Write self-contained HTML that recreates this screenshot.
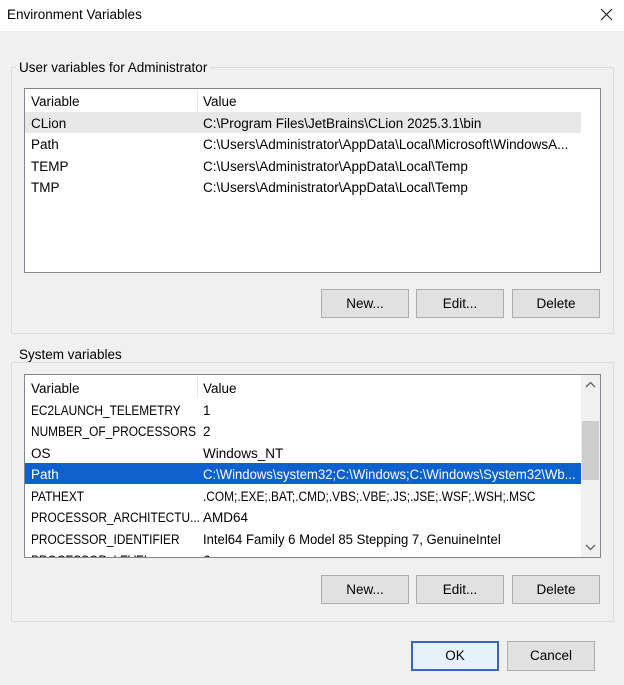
<!DOCTYPE html>
<html><head><style>
*{margin:0;padding:0;box-sizing:border-box}
body{width:624px;height:685px;background:#f0f0f0;font-family:"Liberation Sans",sans-serif;font-size:13px;color:#000;position:relative;overflow:hidden}
.abs{position:absolute}
.title{left:0;top:0;width:624px;height:31px;background:#fff}
.t{white-space:nowrap;position:absolute}
.grp{border:1px solid #dcdcdc;}
.lbl{background:#f0f0f0;padding:0 3px}
.list{background:#fff;border:1px solid #828790;overflow:hidden;font-size:13.5px}
.row{position:absolute;left:0;height:21px;line-height:23px;white-space:nowrap}
.row span{position:absolute}
.u{transform:scaleX(.88);transform-origin:0 0}
.btn{position:absolute;background:#e1e1e1;border:1px solid #adadad;text-align:center;line-height:28px;height:29px;width:88px;font-size:13.5px}
</style></head><body>
<div class="abs title"></div>
<div class="t" style="left:7px;top:7px;font-size:13.5px">Environment Variables</div>
<svg class="abs" style="left:600px;top:8px" width="13" height="13"><path d="M1 1L12 12M12 1L1 12" stroke="#222" stroke-width="1.2"/></svg>

<div class="abs grp" style="left:11px;top:67px;width:603px;height:267px"></div>
<div class="t lbl" style="left:16px;top:60px;font-size:13.5px">User variables for Administrator</div>
<div class="abs list" style="left:24px;top:88px;width:577px;height:185px">
 <div class="row" style="top:1px;width:575px"><span style="left:6px">Variable</span><span style="left:172px;border-left:1px solid #e5e5e5;padding-left:5px;height:21px">Value</span></div>
 <div class="row" style="top:23px;width:556px;background:#e8e8e8"><span style="left:6px">CLion</span><span style="left:178px">C:\Program Files\JetBrains\CLion 2025.3.1\bin</span></div>
 <div class="row" style="top:44px"><span style="left:6px">Path</span><span style="left:178px">C:\Users\Administrator\AppData\Local\Microsoft\WindowsA...</span></div>
 <div class="row" style="top:66px"><span style="left:6px">TEMP</span><span style="left:178px">C:\Users\Administrator\AppData\Local\Temp</span></div>
 <div class="row" style="top:87px"><span style="left:6px">TMP</span><span style="left:178px">C:\Users\Administrator\AppData\Local\Temp</span></div>
</div>
<div class="btn" style="left:321px;top:289px">New...</div>
<div class="btn" style="left:416px;top:289px">Edit...</div>
<div class="btn" style="left:512px;top:289px">Delete</div>

<div class="abs grp" style="left:11px;top:362px;width:603px;height:260px"></div>
<div class="t lbl" style="left:16px;top:347px;font-size:13.5px">System variables</div>
<div class="abs list" style="left:24px;top:374px;width:577px;height:184px">
 <div class="row" style="top:2px;width:556px"><span style="left:6px">Variable</span><span style="left:172px;border-left:1px solid #e5e5e5;padding-left:5px;height:21px">Value</span></div>
 <div class="row" style="top:24px"><span class="u" style="left:6px">EC2LAUNCH_TELEMETRY</span><span style="left:178px">1</span></div>
 <div class="row" style="top:45px"><span class="u" style="left:6px">NUMBER_OF_PROCESSORS</span><span style="left:178px">2</span></div>
 <div class="row" style="top:67px"><span style="left:6px">OS</span><span style="left:178px">Windows_NT</span></div>
 <div class="row" style="top:88px;width:556px;background:#0c61cf;color:#fff"><span style="left:6px">Path</span><span style="left:178px;transform:scaleX(.97);transform-origin:0 0">C:\Windows\system32;C:\Windows;C:\Windows\System32\Wb...</span></div>
 <div class="row" style="top:110px"><span class="u" style="left:6px">PATHEXT</span><span class="u" style="left:178px">.COM;.EXE;.BAT;.CMD;.VBS;.VBE;.JS;.JSE;.WSF;.WSH;.MSC</span></div>
 <div class="row" style="top:131px"><span class="u" style="left:6px">PROCESSOR_ARCHITECTU...</span><span style="left:178px">AMD64</span></div>
 <div class="row" style="top:153px"><span class="u" style="left:6px">PROCESSOR_IDENTIFIER</span><span style="left:178px;transform:scaleX(.97);transform-origin:0 0">Intel64 Family 6 Model 85 Stepping 7, GenuineIntel</span></div>
 <div class="row" style="top:174px"><span class="u" style="left:6px">PROCESSOR_LEVEL</span><span style="left:178px">6</span></div>
 <div class="abs" style="left:556px;top:0;width:19px;height:182px;background:#f0f0f0"></div>
 <div class="abs" style="left:557px;top:46px;width:17px;height:59px;background:#cdcdcd"></div>
 <svg class="abs" style="left:560px;top:6px" width="11" height="8"><path d="M1 6L5.5 1.5L10 6" fill="none" stroke="#606060" stroke-width="1.3"/></svg>
 <svg class="abs" style="left:560px;top:168px" width="11" height="8"><path d="M1 2L5.5 6.5L10 2" fill="none" stroke="#606060" stroke-width="1.3"/></svg>
</div>
<div class="btn" style="left:321px;top:575px">New...</div>
<div class="btn" style="left:416px;top:575px">Edit...</div>
<div class="btn" style="left:512px;top:575px">Delete</div>

<div class="btn" style="left:411px;top:641px;width:88px;height:30px;background:#e5f1fb;border:2px solid #3c62c9;line-height:26px">OK</div>
<div class="btn" style="left:507px;top:641px;width:88px;height:30px;line-height:28px">Cancel</div>
</body></html>
